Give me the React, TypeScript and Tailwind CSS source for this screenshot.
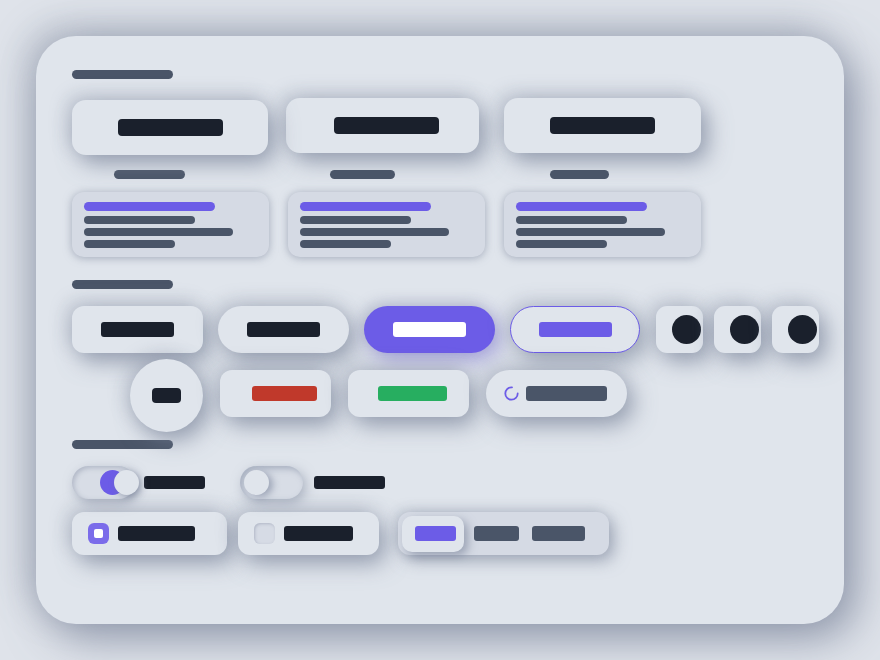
import React from "react";

// Soft raised surface used by buttons and tiles
const raised =
  "bg-[#e0e5ec] shadow-[7px_9px_22px_rgba(120,130,152,0.68),-5px_-5px_18px_rgba(120,130,152,0.32)]";
// Slightly sunken panel colour with a thin halo
const panel =
  "bg-[#d5dae4] shadow-[0_1px_8px_rgba(120,130,152,0.6)]";

function Bar({ className }: { className: string }) {
  return <span className={"block shrink-0 " + className} />;
}

function InfoCard() {
  return (
    <div className={"mt-[13px] flex h-[65px] w-[197px] flex-col rounded-[12px] pl-3 pt-[10px] " + panel}>
      <Bar className="h-[9px] w-[131px] rounded-full bg-[#6c5ce7]" />
      <Bar className="mt-[5px] h-[8px] w-[111px] rounded-full bg-[#4a5568]" />
      <Bar className="mt-[4px] h-[8px] w-[149px] rounded-full bg-[#4a5568]" />
      <Bar className="mt-[4px] h-[8px] w-[91px] rounded-full bg-[#4a5568]" />
    </div>
  );
}

function IconTile() {
  return (
    <div className={"flex h-[47px] w-[47px] shrink-0 items-center rounded-[11px] pl-4 " + raised}>
      <span className="block h-[29px] w-[29px] shrink-0 rounded-full bg-[#1a202c]" />
    </div>
  );
}

function Spinner() {
  return (
    <svg width="15" height="15" viewBox="0 0 15 15" className="shrink-0">
      <circle
        cx="7.5"
        cy="7.5"
        r="6.2"
        fill="none"
        stroke="#6c5ce7"
        strokeWidth="1.8"
        strokeDasharray="29 10"
        strokeLinecap="round"
      />
    </svg>
  );
}

export default function App() {
  return (
    <div className="min-h-screen bg-[#dfe3ea] p-9">
      <div className="h-[588px] rounded-[40px] bg-[#e0e5ec] pl-9 pt-[34px] shadow-[12px_14px_44px_rgba(115,125,148,0.72),-10px_-10px_34px_rgba(115,125,148,0.38)]">
        {/* Section: cards */}
        <Bar className="h-[9px] w-[101px] rounded-full bg-[#4a5568]" />
        <div className="mt-[19px] flex gap-[19px]">
          <div className="flex w-[197px] flex-col">
            <div className={"flex h-[55px] w-[196px] translate-y-[2px] items-center rounded-[14px] pl-[46px] " + raised}>
              <Bar className="h-[17px] w-[105px] rounded-[4px] bg-[#1a202c]" />
            </div>
            <Bar className="ml-[42px] mt-[17px] h-[9px] w-[71px] rounded-full bg-[#4a5568]" />
            <InfoCard />
          </div>
          <div className="flex w-[197px] flex-col">
            <div className={"-ml-[2px] flex h-[55px] w-[193px] items-center rounded-[14px] pl-[48px] " + raised}>
              <Bar className="h-[17px] w-[105px] rounded-[4px] bg-[#1a202c]" />
            </div>
            <Bar className="ml-[42px] mt-[17px] h-[9px] w-[65px] rounded-full bg-[#4a5568]" />
            <InfoCard />
          </div>
          <div className="flex w-[197px] flex-col">
            <div className={"flex h-[55px] w-[197px] items-center rounded-[14px] pl-[46px] " + raised}>
              <Bar className="h-[17px] w-[105px] rounded-[4px] bg-[#1a202c]" />
            </div>
            <Bar className="ml-[46px] mt-[17px] h-[9px] w-[59px] rounded-full bg-[#4a5568]" />
            <InfoCard />
          </div>
        </div>

        {/* Section: buttons */}
        <Bar className="mt-[23px] h-[9px] w-[101px] rounded-full bg-[#4a5568]" />
        <div className="mt-[17px] flex items-center">
          <div className={"flex h-[47px] w-[131px] shrink-0 items-center justify-center rounded-[12px] " + raised}>
            <Bar className="h-[15px] w-[73px] rounded-[3px] bg-[#1a202c]" />
          </div>
          <div className={"ml-[15px] flex h-[47px] w-[131px] shrink-0 items-center justify-center rounded-full " + raised}>
            <Bar className="h-[15px] w-[73px] rounded-[3px] bg-[#1a202c]" />
          </div>
          <div className="ml-[15px] flex h-[47px] w-[131px] shrink-0 items-center justify-center rounded-full bg-[#6c5ce7] shadow-[6px_8px_20px_rgba(100,88,200,0.45),-4px_-4px_14px_rgba(120,130,152,0.32)]">
            <Bar className="h-[15px] w-[73px] rounded-[3px] bg-white" />
          </div>
          <div className="ml-[15px] flex h-[47px] w-[130px] shrink-0 items-center justify-center rounded-full border-[1.5px] border-[#6c5ce7] bg-[#e0e5ec] shadow-[7px_9px_22px_rgba(120,130,152,0.62),-5px_-5px_18px_rgba(120,130,152,0.3)]">
            <Bar className="h-[15px] w-[73px] rounded-[3px] bg-[#6c5ce7]" />
          </div>
          <div className="ml-4 flex gap-[11px]">
            <IconTile />
            <IconTile />
            <IconTile />
          </div>
        </div>
        <div className="mt-[6px] flex items-start pl-[58px]">
          <div className={"flex h-[73px] w-[73px] shrink-0 items-center justify-center rounded-full " + raised}>
            <Bar className="h-[15px] w-[29px] rounded-[4px] bg-[#1a202c]" />
          </div>
          <div className={"ml-[17px] mt-[11px] flex h-[47px] w-[111px] shrink-0 items-center rounded-[12px] pl-8 " + raised}>
            <Bar className="h-[15px] w-[65px] rounded-[3px] bg-[#c0392b]" />
          </div>
          <div className={"ml-[17px] mt-[11px] flex h-[47px] w-[121px] shrink-0 items-center rounded-[12px] pl-[30px] " + raised}>
            <Bar className="h-[15px] w-[69px] rounded-[3px] bg-[#27ae60]" />
          </div>
          <div className={"ml-[17px] mt-[11px] flex h-[47px] w-[141px] shrink-0 items-center rounded-full pl-[18px] " + raised}>
            <Spinner />
            <Bar className="ml-[7px] h-[15px] w-[81px] rounded-[3px] bg-[#4a5568]" />
          </div>
        </div>

        {/* Section: form controls */}
        <Bar className="mt-[8px] h-[9px] w-[101px] rounded-full bg-[#4a5568]" />
        <div className="mt-[17px] flex h-[33px] items-center">
          <div className="relative h-[33px] w-[63px] shrink-0 rounded-full bg-[#d8dde6] shadow-[inset_2px_2px_5px_rgba(130,140,162,0.45),3px_4px_12px_rgba(120,130,152,0.55)]">
            <span className="absolute left-[28px] top-[4px] block h-[25px] w-[25px] rounded-full bg-[#6c5ce7]" />
            <span className="absolute left-[42px] top-[4px] block h-[25px] w-[25px] rounded-full bg-[#e0e5ec] shadow-[2px_2px_6px_rgba(110,120,145,0.6)]" />
          </div>
          <Bar className="ml-[9px] h-[13px] w-[61px] rounded-[3px] bg-[#1a202c]" />
          <div className="relative ml-[35px] h-[33px] w-[63px] shrink-0 rounded-full bg-[#d8dde6] shadow-[inset_3px_3px_6px_rgba(130,140,162,0.55),3px_4px_12px_rgba(120,130,152,0.5)]">
            <span className="absolute left-[4px] top-[4px] block h-[25px] w-[25px] rounded-full bg-[#e0e5ec] shadow-[4px_2px_7px_rgba(110,120,145,0.55)]" />
          </div>
          <Bar className="ml-[11px] h-[13px] w-[71px] rounded-[3px] bg-[#1a202c]" />
        </div>
        <div className="mt-[13px] flex items-start">
          <div className={"flex h-[43px] w-[155px] shrink-0 items-center rounded-[12px] pl-4 " + raised}>
            <span className="flex h-[21px] w-[21px] shrink-0 items-center justify-center rounded-[6px] bg-[#7b6cea]">
              <span className="block h-[9px] w-[9px] rounded-[2px] bg-white" />
            </span>
            <Bar className="ml-[9px] h-[15px] w-[77px] rounded-[3px] bg-[#1a202c]" />
          </div>
          <div className={"ml-[11px] flex h-[43px] w-[141px] shrink-0 items-center rounded-[12px] pl-4 " + raised}>
            <span className="block h-[21px] w-[21px] shrink-0 rounded-[6px] bg-[#d6dbe5] shadow-[inset_1px_1px_3px_rgba(130,140,162,0.45)]" />
            <Bar className="ml-[9px] h-[15px] w-[69px] rounded-[3px] bg-[#1a202c]" />
          </div>
          <div className="ml-[19px] flex h-[43px] w-[211px] shrink-0 items-center rounded-[12px] bg-[#d5dae4] pl-1 shadow-[5px_6px_16px_rgba(120,130,152,0.6),-3px_-3px_12px_rgba(120,130,152,0.28)]">
            <div className="flex h-[36px] w-[62px] shrink-0 items-center rounded-[10px] bg-[#e0e5ec] pl-[13px] shadow-[4px_4px_10px_rgba(115,125,148,0.6)]">
              <Bar className="h-[15px] w-[41px] rounded-[3px] bg-[#6c5ce7]" />
            </div>
            <Bar className="ml-[10px] h-[15px] w-[45px] rounded-[3px] bg-[#4a5568]" />
            <Bar className="ml-[13px] h-[15px] w-[53px] rounded-[3px] bg-[#4a5568]" />
          </div>
        </div>
      </div>
    </div>
  );
}
